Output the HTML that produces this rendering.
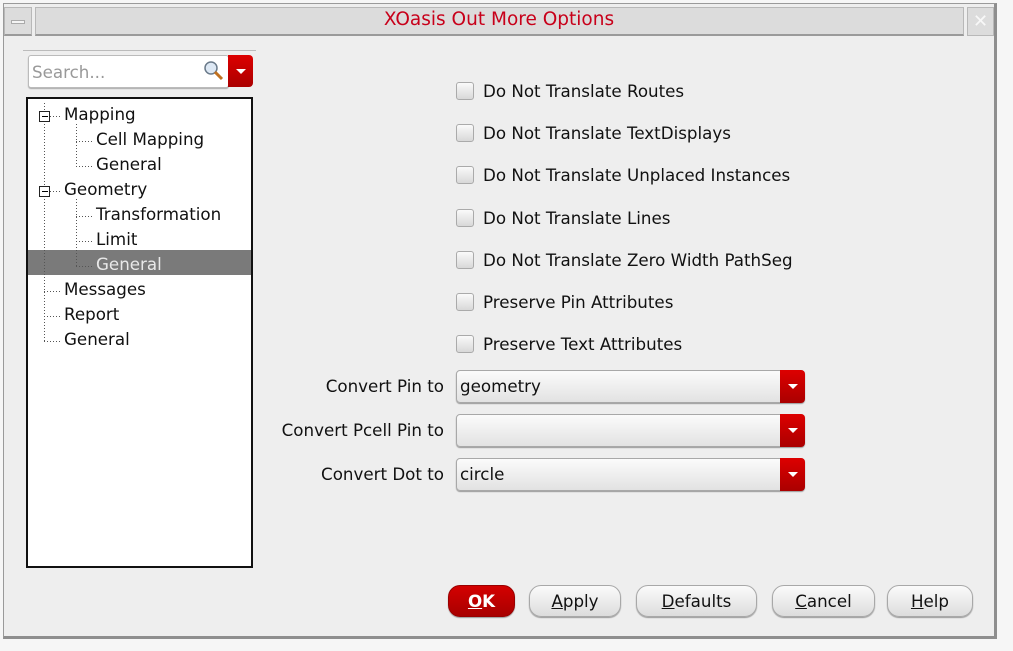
<!DOCTYPE html>
<html><head><style>
*{margin:0;padding:0;box-sizing:border-box}
body{width:1013px;height:651px;background:#f6f6f6;font-family:"DejaVu Sans","Liberation Sans",sans-serif;font-size:16.7px;color:#111;position:relative;overflow:hidden}
.win{position:absolute;left:3px;top:3px;width:994px;height:636px;background:#eeeeee;border:1px solid #9a9a9a;border-right:3px solid #8e8e8e;border-bottom:3px solid #8e8e8e}
.abs{position:absolute}
.tb{position:absolute;left:4px;top:3px;width:955px;height:29px;background:#dcdcdc;border:1px solid #b8b8b8;border-bottom:2px solid #9a9a9a}
.cb{position:absolute;width:18px;height:18px;border:1px solid #aaa;border-radius:3px;background:linear-gradient(#fafafa,#d8d8d8)}
.lbl{position:absolute;white-space:nowrap}
.combo{position:absolute;left:452px;width:349px;height:33px;border:1px solid #a8a8a8;border-radius:4px;background:linear-gradient(#fbfbfb,#e2e2e2);box-shadow:0 1px 1px #999}
.combo span{position:absolute;left:3px;top:5px}
.dd{position:absolute;right:-1px;top:-1px;width:25px;height:33px;background:linear-gradient(#d00,#a00);border-radius:0 4px 4px 0}
.dd:after{content:"";position:absolute;left:8px;top:14px;border-left:5px solid transparent;border-right:5px solid transparent;border-top:5px solid #fff}
.btn{position:absolute;top:581px;height:32px;border:1px solid #a8a8a8;border-radius:12px;background:linear-gradient(#fbfbfb,#dcdcdc);text-align:center;line-height:30px;box-shadow:0 1px 1px #999}
.tree div{position:absolute;white-space:nowrap}
</style></head><body>
<div class="win">
 <div class="abs" style="left:0;top:3px;width:28px;height:29px;background:#dcdcdc;border:1px solid #b8b8b8;border-bottom:2px solid #9a9a9a"><div class="abs" style="left:6px;top:12px;width:14px;height:4px;border:1px solid #aaa;background:#f4f4f4"></div></div>
 <div class="tb" style="left:31px;width:929px"></div>
 <div class="lbl" style="left:0;width:990px;text-align:center;top:5px;color:#c8001a;font-size:18.5px">XOasis Out More Options</div>
 <div class="abs" style="left:963px;top:3px;width:27px;height:29px;background:#dcdcdc;border:1px solid #b8b8b8;color:#f8f8f8;text-align:center;font-size:18px;line-height:27px">✕</div>
 <div class="abs" style="left:19px;top:46px;width:233px;height:1px;background:#bbb"></div>
 <div class="abs" style="left:24px;top:51px;width:201px;height:33px;background:#fff;border:1px solid #bbb;border-radius:3px;box-shadow:0 1px 1px #aaa"><span class="abs" style="left:3px;top:6px;color:#999">Search...</span>
 <svg class="abs" style="left:174px;top:4px" width="22" height="22"><circle cx="8" cy="8" r="6" fill="#dde8f4" stroke="#6a7a8a" stroke-width="1.5"/><line x1="12" y1="12" x2="19" y2="19" stroke="#c07020" stroke-width="3"/></svg></div>
 <div class="dd" style="left:224px;right:auto;top:51px;height:32px"></div>
 <div class="abs tree" style="left:22px;top:93px;width:227px;height:471px;background:#fff;border:2px solid #111">
  <div style="left:0;top:151px;width:223px;height:25px;background:#7a7a7a"></div>
  <svg class="abs" style="left:0;top:0" width="223" height="250"><g stroke="#555" stroke-dasharray="1,2" fill="none"><line x1="16.5" y1="4" x2="16.5" y2="242"/><line x1="16" y1="242.5" x2="34" y2="242.5"/><line x1="16" y1="192.5" x2="34" y2="192.5"/><line x1="16" y1="217.5" x2="34" y2="217.5"/><line x1="22" y1="17.5" x2="34" y2="17.5"/><line x1="22" y1="92.5" x2="34" y2="92.5"/><line x1="48.5" y1="25" x2="48.5" y2="67"/><line x1="48" y1="42.5" x2="66" y2="42.5"/><line x1="48" y1="67.5" x2="66" y2="67.5"/><line x1="48.5" y1="100" x2="48.5" y2="167"/><line x1="48" y1="117.5" x2="66" y2="117.5"/><line x1="48" y1="142.5" x2="66" y2="142.5"/><line x1="48" y1="167.5" x2="66" y2="167.5"/></g>
  <g fill="#fff" stroke="#222"><rect x="11.5" y="12.5" width="10" height="10"/><rect x="11.5" y="87.5" width="10" height="10"/></g><line x1="14" y1="17.5" x2="20" y2="17.5" stroke="#000"/><line x1="14" y1="92.5" x2="20" y2="92.5" stroke="#000"/></svg>
  <div style="left:36px;top:5px">Mapping</div>
  <div style="left:68px;top:30px">Cell Mapping</div>
  <div style="left:68px;top:55px">General</div>
  <div style="left:36px;top:80px">Geometry</div>
  <div style="left:68px;top:105px">Transformation</div>
  <div style="left:68px;top:130px">Limit</div>
  <div style="left:68px;top:155px;color:#e8e8e8">General</div>
  <div style="left:36px;top:180px">Messages</div>
  <div style="left:36px;top:205px">Report</div>
  <div style="left:36px;top:230px">General</div>
 </div>
 <div class="cb" style="left:452px;top:78px"></div><div class="lbl" style="left:479px;top:77px">Do Not Translate Routes</div>
 <div class="cb" style="left:452px;top:120px"></div><div class="lbl" style="left:479px;top:119px">Do Not Translate TextDisplays</div>
 <div class="cb" style="left:452px;top:162px"></div><div class="lbl" style="left:479px;top:161px">Do Not Translate Unplaced Instances</div>
 <div class="cb" style="left:452px;top:205px"></div><div class="lbl" style="left:479px;top:204px">Do Not Translate Lines</div>
 <div class="cb" style="left:452px;top:247px"></div><div class="lbl" style="left:479px;top:246px">Do Not Translate Zero Width PathSeg</div>
 <div class="cb" style="left:452px;top:289px"></div><div class="lbl" style="left:479px;top:288px">Preserve Pin Attributes</div>
 <div class="cb" style="left:452px;top:331px"></div><div class="lbl" style="left:479px;top:330px">Preserve Text Attributes</div>
 <div class="lbl" style="right:550px;top:372px">Convert Pin to</div>
 <div class="lbl" style="right:550px;top:416px">Convert Pcell Pin to</div>
 <div class="lbl" style="right:550px;top:460px">Convert Dot to</div>
 <div class="combo" style="top:366px"><span>geometry</span><div class="dd"></div></div>
 <div class="combo" style="top:410px"><div class="dd"></div></div>
 <div class="combo" style="top:454px"><span>circle</span><div class="dd"></div></div>
 <div class="btn" style="left:444px;width:67px;background:linear-gradient(#d40000,#a80000);border-color:#900;color:#fff;font-weight:bold"><u>O</u>K</div>
 <div class="btn" style="left:525px;width:92px"><u>A</u>pply</div>
 <div class="btn" style="left:632px;width:121px"><u>D</u>efaults</div>
 <div class="btn" style="left:768px;width:103px"><u>C</u>ancel</div>
 <div class="btn" style="left:883px;width:86px"><u>H</u>elp</div>
</div>
</body></html>
